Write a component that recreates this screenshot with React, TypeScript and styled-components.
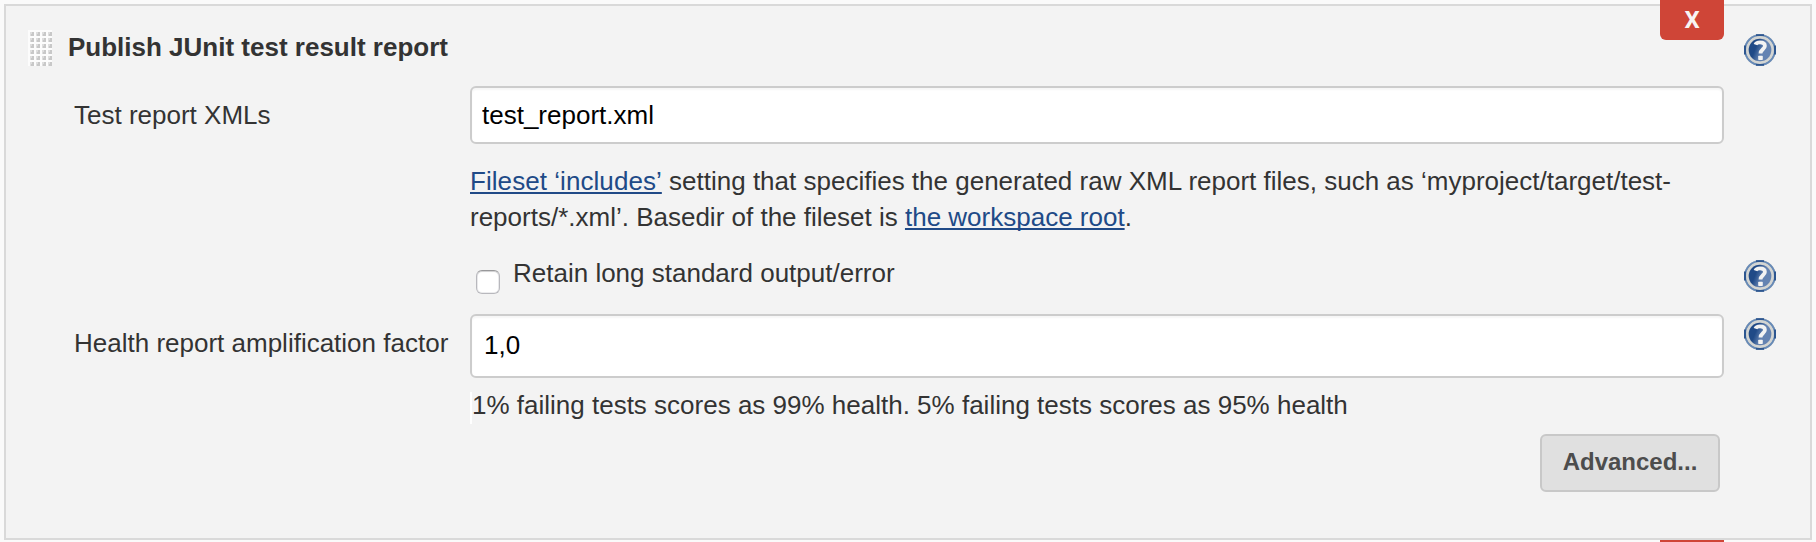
import React from "react";
import styled, { createGlobalStyle } from "styled-components";

const GlobalStyle = createGlobalStyle`
  *, *::before, *::after { box-sizing: border-box; }
  body {
    margin: 0;
    background: #fafafa;
    color: #333;
    font: 26px/36px "Liberation Sans", Helvetica, Arial, sans-serif;
    overflow: hidden;
  }
`;

const Page = styled.div`
  height: 542px;
  padding: 4px 4px 2px;
  overflow: hidden;
`;

const Panel = styled.section`
  position: relative;
  height: 536px;
  border: 2px solid #d9d9d9;
  background: #f3f3f3;
`;

const Row = styled.div<{ $height: number; $gap?: number }>`
  display: grid;
  grid-template-columns: 464px 1254px 32px;
  height: ${(p) => p.$height}px;
  margin-top: ${(p) => p.$gap ?? 0}px;
`;

const Header = styled.div`
  display: flex;
  grid-column: 1 / 3;
  padding: 24px 0 0 22px;
`;

const Grip = styled.svg`
  display: block;
  flex: none;
  width: 24px;
  height: 36px;
`;

const Title = styled.h2`
  margin: -1px 0 0 16px;
  font-size: 26px;
  line-height: 36px;
  font-weight: bold;
  white-space: nowrap;
`;

const Label = styled.label`
  padding: 11px 0 0 68px;
  white-space: nowrap;
`;

const TextInput = styled.input<{ $indent: number; $lift?: number }>`
  grid-column: 2;
  width: 100%;
  height: 100%;
  padding: 0 12px ${(p) => p.$lift ?? 0}px ${(p) => p.$indent}px;
  border: 2px solid #ccc;
  border-radius: 6px;
  outline: none;
  background: #fff;
  box-shadow: inset 0 2px 2px rgba(0, 0, 0, 0.04);
  color: #000;
  font: inherit;
`;

const Description = styled.p`
  grid-column: 2;
  margin: 0;
  white-space: nowrap;
`;

const Link = styled.a<{ $wide?: boolean }>`
  color: #204a87;
  letter-spacing: ${(p) => (p.$wide ? "0.06px" : "normal")};
  text-decoration: underline;
  text-decoration-thickness: 2px;
  text-underline-offset: 2px;
  text-decoration-skip-ink: none;
`;

const CheckLabel = styled.label`
  grid-column: 2;
  display: flex;
  align-items: flex-start;
  gap: 13px;
  padding-left: 6px;
`;

const Checkbox = styled.input`
  appearance: none;
  width: 24px;
  height: 24px;
  margin: 15px 0 0;
  border: 1.5px solid #b8b8bd;
  border-top-color: #98989a;
  border-radius: 6px;
  background: #fff;
  box-shadow: inset 0 1px 1px rgba(0, 0, 0, 0.12), inset 0 0 0 1px #ececee;
`;

const Validation = styled.div`
  grid-column: 2;
  border-left: 2px solid #fff;
  line-height: 26px;
  white-space: nowrap;
`;

const ButtonCell = styled.div`
  grid-column: 2;
  display: flex;
  justify-content: flex-end;
  padding-right: 4px;
`;

const Button = styled.button`
  width: 180px;
  height: 58px;
  padding: 0 0 3px;
  border: 2px solid #c8c8c8;
  border-radius: 6px;
  background: #e0e0e0;
  color: #4d4d4d;
  font: bold 24px/30px "Liberation Sans", Helvetica, Arial, sans-serif;
`;

const DeleteTab = styled.button`
  position: absolute;
  top: -12px;
  right: 86px;
  width: 64px;
  height: 46px;
  padding: 5px 0 0;
  border: 0;
  border-radius: 6px;
  background: #cf4537;
  color: #f8f4f4;
  font: bold 24px/30px Roboto, sans-serif;
`;

const NextPanelEdge = styled.div`
  width: 64px;
  height: 2px;
  margin-left: 1656px;
  background: #cf4537;
`;

const HelpSvg = styled.svg<{ $offset: number }>`
  grid-column: 3;
  display: block;
  width: 32px;
  height: 32px;
  margin: ${(p) => p.$offset}px 0 0 20px;
`;

function Help({ offset, id }: { offset: number; id: string }) {
  return (
    <HelpSvg $offset={offset} viewBox="0 0 32 32" role="img" aria-label="Help">
      <defs>
        <linearGradient id={id} x1="0" y1="0.3" x2="1" y2="0.7">
          <stop offset="0.3" stopColor="#204a87" />
          <stop offset="0.6" stopColor="#6483b2" />
        </linearGradient>
      </defs>
      <circle cx="16" cy="16" r="16" fill="#b9bbbb" />
      <circle cx="16" cy="16" r="14.8" fill="none" stroke="#668ab8" strokeWidth="2" />
      <path d="M1 11.5v9M31 11.5v9M12 1.2h8M12 30.8h8" stroke="#2d5690" strokeWidth="2" />
      <circle cx="16" cy="16" r="12.6" fill="none" stroke="#d3d5d3" strokeWidth="2.6" />
      <circle cx="16" cy="16" r="11.3" fill={`url(#${id})`} />
      <path
        d="M11.5 10.6c.5-1.6 2.4-2.3 4.5-2.3 3 0 4.9 1.3 4.9 3.6 0 3.3-4.4 3.5-4.4 7.6"
        fill="none"
        stroke="#f3f3f3"
        strokeWidth="3.8"
      />
      <rect x="14.2" y="21.7" width="4.6" height="4.3" rx=".7" fill="#f3f3f3" />
    </HelpSvg>
  );
}

function DragHandle() {
  return (
    <Grip viewBox="0 0 24 36" shapeRendering="crispEdges" aria-hidden="true">
      {Array.from({ length: 24 }, (_, i) => (
        <g key={i} transform={`translate(${(i % 4) * 6} ${Math.floor(i / 4) * 6})`}>
          <path d="M0 0h6v2H2v4H0z" fill="#fcfcfc" />
          <path d="M2 2h4v4H2z" fill="#dedede" />
          <path d="M4 2h2v4H3V4h1z" fill="#c8c8c8" />
        </g>
      ))}
    </Grip>
  );
}

export default function App() {
  return (
    <>
      <GlobalStyle />
      <Page>
        <Panel>
          <Row $height={80}>
            <Header>
              <DragHandle />
              <Title>Publish JUnit test result report</Title>
            </Header>
            <Help offset={28} id="help-publisher" />
          </Row>

          <Row $height={58}>
            <Label htmlFor="xmls">Test report XMLs</Label>
            <TextInput $indent={10} id="xmls" defaultValue="test_report.xml" spellCheck={false} />
          </Row>

          <Row $height={72} $gap={19}>
            <Description>
              <Link $wide>Fileset ‘includes’</Link> setting that specifies the generated raw XML report
              files, such as ‘myproject/target/test-
              <br />
              reports/*.xml’. Basedir of the fileset is <Link>the workspace root</Link>.
            </Description>
          </Row>

          <Row $height={39} $gap={20}>
            <CheckLabel>
              <Checkbox type="checkbox" />
              Retain long standard output/error
            </CheckLabel>
            <Help offset={5} id="help-retain" />
          </Row>

          <Row $height={64} $gap={20}>
            <Label htmlFor="factor">Health report amplification factor</Label>
            <TextInput $indent={12} $lift={2} id="factor" defaultValue="1,0" />
            <Help offset={4} id="help-factor" />
          </Row>

          <Row $height={32} $gap={14}>
            <Validation>1% failing tests scores as 99% health. 5% failing tests scores as 95% health</Validation>
          </Row>

          <Row $height={58} $gap={10}>
            <ButtonCell>
              <Button type="button">Advanced...</Button>
            </ButtonCell>
          </Row>

          <DeleteTab type="button">X</DeleteTab>
        </Panel>
        <NextPanelEdge />
      </Page>
    </>
  );
}
